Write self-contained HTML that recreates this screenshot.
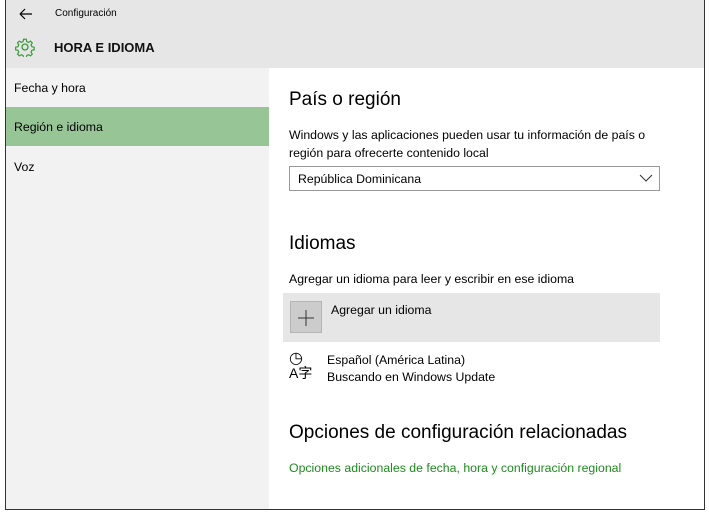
<!DOCTYPE html><html><head><meta charset="utf-8"><style>
body{margin:0;width:709px;height:515px;background:#fff;font-family:"Liberation Sans",sans-serif;position:relative;overflow:hidden}
.frame{position:absolute;left:5px;top:-1px;width:700px;height:511px;border:1px solid #333;box-sizing:border-box;overflow:hidden}
.hdr{position:absolute;left:0;top:0;width:700px;height:68px;background:#e6e6e6}
.side{position:absolute;left:0;top:68px;width:263px;height:445px;background:#f2f2f2}
.t{position:absolute;white-space:nowrap;color:#000}
.s{font-size:12.3px}
.sel{position:absolute;left:0;top:107px;width:263px;height:39px;background:#98c596}
</style></head><body><div class="frame">
<div class="hdr"></div><div class="side"></div><div class="sel"></div>
<svg style="position:absolute;left:13px;top:8px" width="14" height="12"><path d="M1 6H13M1 6L6 1M1 6L6 11" stroke="#000" stroke-width="1.2" fill="none"/></svg>
<div class="t" style="left:49px;top:8px;font-size:10px">Configuración</div>
<svg style="position:absolute;left:9px;top:37px" width="20" height="20" viewBox="0 0 20 20"><g fill="none" stroke="#3a9a3a" stroke-width="1.3"><circle cx="10" cy="10" r="3"/><path d="M8.5 1.5h3l.5 2.5 2 1 2.2-1.4 2 2-1.4 2.2 1 2 2.5.5v3l-2.5.5-1 2 1.4 2.2-2 2-2.2-1.4-2 1-.5 2.5h-3l-.5-2.5-2-1-2.2 1.4-2-2 1.4-2.2-1-2-2.5-.5v-3l2.5-.5 1-2-1.4-2.2 2-2 2.2 1.4 2-1z" transform="scale(.9) translate(1 1)"/></g></svg>
<div class="t" style="left:48px;top:40px;font-size:13px;font-weight:bold;color:#111">HORA E IDIOMA</div>
<div class="t s" style="left:8px;top:81px">Fecha y hora</div>
<div class="t s" style="left:8px;top:120px">Región e idioma</div>
<div class="t s" style="left:8px;top:160px">Voz</div>
<div class="t" style="left:283px;top:89px;font-size:19px">País o región</div>
<div class="t s" style="left:283px;top:126px;line-height:18px">Windows y las aplicaciones pueden usar tu información de país o<br>región para ofrecerte contenido local</div>
<div style="position:absolute;left:283px;top:166px;width:371px;height:25px;border:1px solid #999;box-sizing:border-box"></div>
<div class="t s" style="left:292px;top:172px">República Dominicana</div>
<svg style="position:absolute;left:633px;top:174px" width="14" height="9"><path d="M1 1L7 7L13 1" stroke="#333" fill="none"/></svg>
<div class="t" style="left:283px;top:233px;font-size:19px">Idiomas</div>
<div class="t s" style="left:283px;top:272px">Agregar un idioma para leer y escribir en ese idioma</div>
<div style="position:absolute;left:277px;top:293px;width:377px;height:49px;background:#e6e6e6"></div>
<div style="position:absolute;left:284px;top:301px;width:32px;height:32px;background:#ccc;border:1px solid #b5b5b5;box-sizing:border-box"></div>
<svg style="position:absolute;left:291px;top:309px" width="18" height="18"><path d="M9 1V17M1 9H17" stroke="#333" stroke-width="1"/></svg>
<div class="t s" style="left:325px;top:303px">Agregar un idioma</div>
<div class="t" style="left:283px;top:352px;font-size:16px;line-height:14px;font-family:'Liberation Sans','Noto Sans CJK SC',sans-serif">◷<br><span style="font-size:14px">A字</span></div>
<div class="t s" style="left:321px;top:352px;line-height:17px">Español (América Latina)<br>Buscando en Windows Update</div>
<div class="t" style="left:283px;top:422px;font-size:19px">Opciones de configuración relacionadas</div>
<div class="t s" style="left:283px;top:461px;color:#1f8a1f">Opciones adicionales de fecha, hora y configuración regional</div>
</div></body></html>
